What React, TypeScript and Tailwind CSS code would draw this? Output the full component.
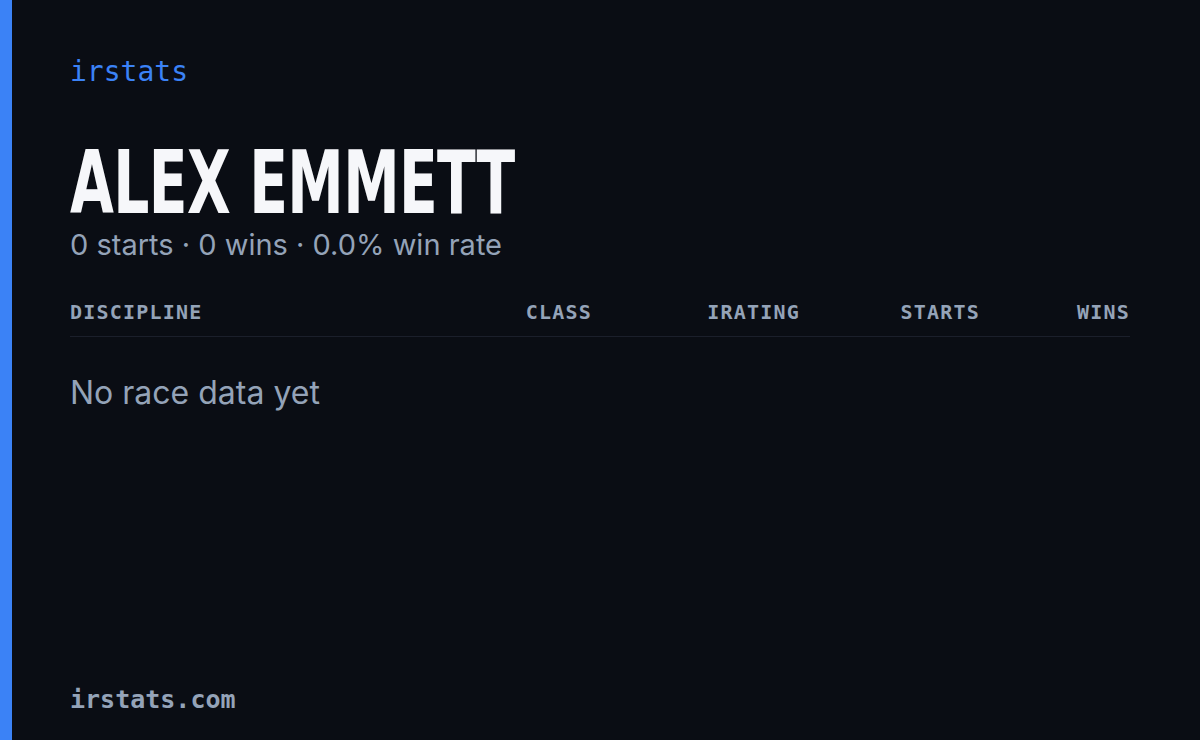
const cols = [
  { label: 'DISCIPLINE', align: 'text-left' },
  { label: 'CLASS', align: 'text-right' },
  { label: 'IRATING', align: 'text-right' },
  { label: 'STARTS', align: 'text-right' },
  { label: 'WINS', align: 'text-right' },
];

export default function App() {
  return (
    <div className="flex h-[740px] w-[1200px] bg-[#0a0d14]">
      <div className="w-3 bg-[#3b82f6]" />
      <div className="flex flex-1 flex-col pl-[58px] pr-[70px] pt-[58px] pb-[28px]">
        <div className="font-['DejaVu_Sans_Mono',monospace] text-[28px] leading-none text-[#3b82f6]">irstats</div>

        {/* no condensed face is installed, so squeeze the bold sans horizontally */}
        <h1 className="mt-[57px] origin-left scale-x-[0.645] font-['DejaVu_Sans',sans-serif] text-[88px] font-bold leading-[80px] tracking-[-1px] whitespace-nowrap text-[#f6f7fa]">
          ALEX EMMETT
        </h1>
        <p className="mt-[7px] font-['Inter',sans-serif] text-[29px] leading-none text-[#94a3b8]">
          0 starts · 0 wins · 0.0% win rate
        </p>

        <div className="mt-[43px] grid grid-cols-[1fr_120px_208px_180px_150px] border-b border-[#1b1f2b] pb-[14px]">
          {cols.map(c => (
            <div
              key={c.label}
              className={`${c.align} font-['DejaVu_Sans_Mono',monospace] text-[20px] font-bold leading-none tracking-[1.2px] text-[#94a3b8]`}
            >
              {c.label}
            </div>
          ))}
        </div>

        <p className="mt-[40px] font-['Inter',sans-serif] text-[32px] leading-none text-[#94a3b8]">
          No race data yet
        </p>

        <div className="mt-auto font-['DejaVu_Sans_Mono',monospace] text-[25px] font-bold leading-none text-[#94a3b8]">
          irstats.com
        </div>
      </div>
    </div>
  );
}
